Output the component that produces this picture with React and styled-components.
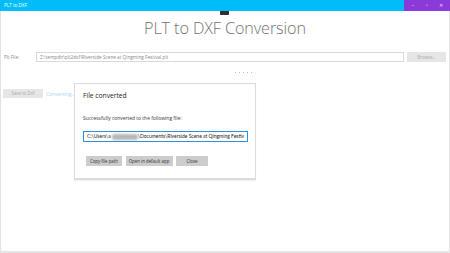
import React from "react";
import styled, { createGlobalStyle } from "styled-components";

const Global = createGlobalStyle`
  html, body { margin: 0; padding: 0; background: #fff; }
  body { font-family: "Open Sans", "Noto Sans", sans-serif; overflow: hidden; }
  * { box-sizing: border-box; }
`;

const Window = styled.div`
  width: 450px;
  height: 253px;
  display: flex;
  flex-direction: column;
  position: relative;
`;

const TitleBar = styled.div`
  height: 11px;
  display: flex;
  flex-shrink: 0;
`;

const TitleArea = styled.div`
  flex: 1;
  background: #00bdf9;
  color: #fff;
  font-size: 4.6px;
  line-height: 11px;
  padding-left: 4px;
`;

const Controls = styled.div`
  width: 46px;
  background: #8a3ad8;
  display: flex;
  align-items: center;
  justify-content: space-around;
  padding: 0 2px;
`;

const Ctl = styled.span`
  color: #e8dcff;
  font-size: 5px;
  line-height: 11px;
  width: 10px;
  text-align: center;
`;

const Tab = styled.div`
  position: absolute;
  left: 220px;
  top: 11px;
  width: 9px;
  height: 4px;
  background: #2f2f2f;
  border-radius: 0 0 1px 1px;
`;

const Body = styled.div`
  flex: 1;
  position: relative;
  border-left: 1px solid #e2e2e2;
  border-right: 1px solid #e2e2e2;
  border-bottom: 2px solid #e6e6e6;
  padding-top: 7px;
  display: flex;
  flex-direction: column;
`;

const Heading = styled.h1`
  margin: 0;
  height: 20px;
  font-size: 16.2px;
  line-height: 20px;
  font-weight: 300;
  color: #727272;
  text-align: center;
  letter-spacing: -0.1px;
`;

const FileRow = styled.div`
  margin-top: 14px;
  display: grid;
  grid-template-columns: 32px 1fr 39px;
  column-gap: 0;
  padding: 0 3px;
  height: 10px;
  align-items: center;
`;

const Label = styled.span`
  font-size: 4.6px;
  color: #8a8a8a;
`;

const PathBox = styled.div`
  height: 10px;
  border: 1px solid #d9d9d9;
  font-size: 4.7px;
  line-height: 8px;
  color: #888;
  padding-left: 3px;
  margin-right: 3px;
  white-space: nowrap;
  overflow: hidden;
`;

const GrayButton = styled.div`
  height: ${(p) => p.$h || 10}px;
  width: ${(p) => p.$w}px;
  background: ${(p) => (p.$dark ? "#cccccc" : "#e6e6e6")};
  color: ${(p) => (p.$dark ? "#333" : "#aaa")};
  font-size: 4.4px;
  line-height: ${(p) => p.$h || 10}px;
  text-align: center;
  white-space: nowrap;
  flex-shrink: 0;
`;

const Progress = styled.div`
  margin-top: 10px;
  height: 2px;
  display: flex;
  justify-content: center;
  gap: 3px;
  padding-left: 37px;
`;

const Dot = styled.span`
  width: 1px;
  height: 1px;
  background: #8fe08f;
`;

const ActionRow = styled.div`
  margin-top: 15px;
  display: flex;
  align-items: center;
  gap: 3px;
  padding-left: 2px;
`;

const Converting = styled.span`
  font-size: 5px;
  color: #a9d4ee;
  white-space: nowrap;
`;

const Dialog = styled.div`
  position: absolute;
  left: 73px;
  top: 72px;
  width: 182px;
  height: 97px;
  background: #fff;
  border: 1px solid #dcdcdc;
  border-bottom-width: 2px;
  box-shadow: 0 1px 1px rgba(0, 0, 0, 0.06);
  padding: 7px 7px 0 8px;
  display: flex;
  flex-direction: column;
`;

const DialogTitle = styled.div`
  font-size: 6.7px;
  line-height: 9px;
  color: #222;
`;

const Message = styled.div`
  margin-top: 15px;
  font-size: 4.95px;
  line-height: 7px;
  color: #333;
  white-space: nowrap;
`;

const PathInput = styled.div`
  margin-top: 9px;
  height: 11px;
  border: 1px solid #2f8ee0;
  font-family: Lato, "Open Sans", sans-serif;
  font-size: 5px;
  line-height: 9px;
  color: #222;
  padding-left: 3px;
  white-space: nowrap;
  overflow: hidden;
`;

const Blur = styled.span`
  display: inline-block;
  width: 26px;
  height: 6px;
  vertical-align: middle;
  background: #b8b8b8;
  border-radius: 2px;
  filter: blur(0.8px);
  margin: 0 0 0 1px;
`;

const DialogButtons = styled.div`
  margin-top: 14px;
  padding-left: 3px;
  display: flex;
  gap: 3.5px;
`;

export default function App() {
  return (
    <>
      <Global />
      <Window>
        <TitleBar>
          <TitleArea>PLT to DXF</TitleArea>
          <Controls>
            <Ctl>–</Ctl>
            <Ctl>▫</Ctl>
            <Ctl>✕</Ctl>
          </Controls>
        </TitleBar>
        <Tab />
        <Body>
          <Heading>PLT to DXF Conversion</Heading>
          <FileRow>
            <Label>Plt File:</Label>
            <PathBox>Z:\tempdir\plt2dxf\Riverside Scene at Qingming Festival.plt</PathBox>
            <GrayButton $w={39}>Browse...</GrayButton>
          </FileRow>
          <Progress>
            {[0, 1, 2, 3, 4].map((i) => (
              <Dot key={i} />
            ))}
          </Progress>
          <ActionRow>
            <GrayButton $w={40} $h={9}>Save to Dxf</GrayButton>
            <Converting>Converting...</Converting>
          </ActionRow>
          <Dialog>
            <DialogTitle>File converted</DialogTitle>
            <Message>Successfully converted to the following file:</Message>
            <PathInput>
              C:\Users\a<Blur />\Documents\Riverside Scene at Qingming Festiv
            </PathInput>
            <DialogButtons>
              <GrayButton $dark $w={36}>Copy file path</GrayButton>
              <GrayButton $dark $w={47}>Open in default app</GrayButton>
              <GrayButton $dark $w={32}>Close</GrayButton>
            </DialogButtons>
          </Dialog>
        </Body>
      </Window>
    </>
  );
}
